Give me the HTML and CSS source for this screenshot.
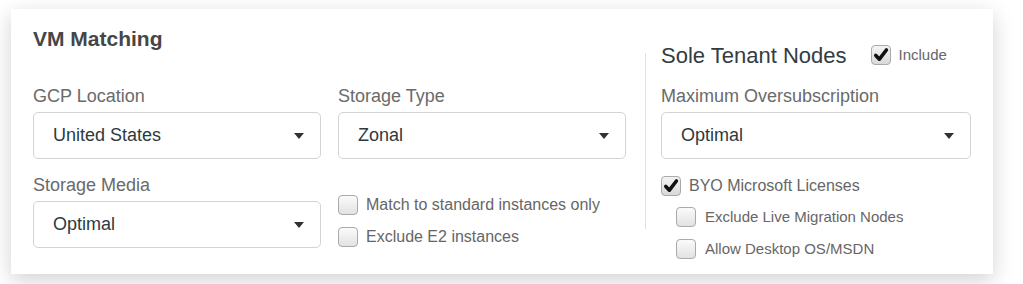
FILE: index.html
```html
<!DOCTYPE html>
<html lang="en">
<head>
    <meta charset="UTF-8">
    <meta name="viewport" content="width=device-width, initial-scale=1.0">
    <title>VM Matching</title>
    <link rel="stylesheet" href="styles.css">
</head>
<body>
    <div class="card">
        <div class="matching">
            <h2 class="title">VM Matching</h2>

            <div class="fields">
                <div class="field">
                    <label>GCP Location</label>
                    <div class="select"><span>United States</span><span class="caret"></span></div>
                </div>

                <div class="field">
                    <label>Storage Type</label>
                    <div class="select"><span>Zonal</span><span class="caret"></span></div>
                </div>

                <div class="field">
                    <label>Storage Media</label>
                    <div class="select"><span>Optimal</span><span class="caret"></span></div>
                </div>

                <div class="options">
                    <div class="check-row">
                        <span class="checkbox"></span>
                        <span>Match to standard instances only</span>
                    </div>
                    <div class="check-row">
                        <span class="checkbox"></span>
                        <span>Exclude E2 instances</span>
                    </div>
                </div>
            </div>
        </div>

        <div class="divider"></div>

        <div class="sole-tenant">
            <div class="sole-head">
                <h3>Sole Tenant Nodes</h3>
                <div class="check-row include">
                    <span class="checkbox checked">
                        <svg viewBox="0 0 20 20" width="20" height="20"><path d="M4.8 10.4 L8.4 14.2 L15.4 5" /></svg>
                    </span>
                    <span>Include</span>
                </div>
            </div>

            <div class="field">
                <label>Maximum Oversubscription</label>
                <div class="select"><span>Optimal</span><span class="caret"></span></div>
            </div>

            <div class="check-row byo">
                <span class="checkbox checked">
                    <svg viewBox="0 0 20 20" width="20" height="20"><path d="M4.8 10.4 L8.4 14.2 L15.4 5" /></svg>
                </span>
                <span>BYO Microsoft Licenses</span>
            </div>
            <div class="sub-options">
                <div class="check-row">
                    <span class="checkbox"></span>
                    <span>Exclude Live Migration Nodes</span>
                </div>
                <div class="check-row">
                    <span class="checkbox"></span>
                    <span>Allow Desktop OS/MSDN</span>
                </div>
            </div>
        </div>
    </div>
</body>
</html>
```

FILE: styles.css
```css
* {
    margin: 0;
    padding: 0;
    box-sizing: border-box;
    font-family: 'Liberation Sans', Arial, Helvetica, sans-serif;
}

body {
    background: #ffffff;
    width: 1023px;
    height: 284px;
    overflow: hidden;
}

.card {
    display: flex;
    width: 982px;
    margin: 9px 0 0 11px;
    padding: 18px 22px 15px 22px;
    background: #fff;
    box-shadow: 0 6px 20px rgba(0, 0, 0, 0.18);
}

.title {
    font-size: 21px;
    line-height: 24px;
    font-weight: 700;
    color: #464646;
    margin-bottom: 35px;
}

.fields {
    display: grid;
    grid-template-columns: 288px 288px;
    column-gap: 17px;
    row-gap: 16px;
}

label {
    display: block;
    font-size: 18px;
    line-height: 20px;
    color: #6a6a6a;
    margin-bottom: 6px;
}

.select {
    display: flex;
    align-items: center;
    justify-content: space-between;
    height: 47px;
    padding: 0 16px 0 19px;
    border: 1.5px solid #d3d3d3;
    border-radius: 5px;
    font-size: 18px;
    color: #2d3a41;
}

.caret {
    width: 0;
    height: 0;
    border-left: 5.5px solid transparent;
    border-right: 5.5px solid transparent;
    border-top: 6px solid #2d3438;
}

.options {
    padding-top: 20px;
    display: flex;
    flex-direction: column;
    gap: 12px;
}

.check-row {
    display: flex;
    align-items: center;
    gap: 8px;
    font-size: 16px;
    line-height: 20px;
    color: #666;
}

.checkbox {
    width: 20px;
    height: 20px;
    flex-shrink: 0;
    border: 1px solid #aaa;
    border-radius: 4px;
    background: linear-gradient(#fbfbfb, #e2e2e2);
    display: flex;
    align-items: center;
    justify-content: center;
}

.checkbox.checked {
    background: linear-gradient(#f4f4f4, #d9d9d9);
}

.checkbox svg {
    display: block;
    flex-shrink: 0;
}

.checkbox svg path {
    fill: none;
    stroke: #111;
    stroke-width: 3.6;
    stroke-linecap: round;
    stroke-linejoin: round;
}

.divider {
    width: 1px;
    height: 176px;
    margin: 26px 15px 0 19px;
    background: #e2e2e2;
}

.sole-tenant {
    width: 310px;
}

.sole-head {
    display: flex;
    align-items: center;
    margin-top: 17px;
    margin-bottom: 18px;
}

.sole-head h3 {
    font-size: 22px;
    line-height: 24px;
    font-weight: 400;
    color: #333c42;
    margin-right: 24px;
}

.include {
    font-size: 15px;
    margin-top: -2px;
}

.byo {
    margin-top: 17px;
}

.sub-options {
    margin-top: 11px;
    padding-left: 15px;
    display: flex;
    flex-direction: column;
    gap: 12px;
}

.sub-options .check-row {
    font-size: 15px;
    gap: 9px;
}
```
